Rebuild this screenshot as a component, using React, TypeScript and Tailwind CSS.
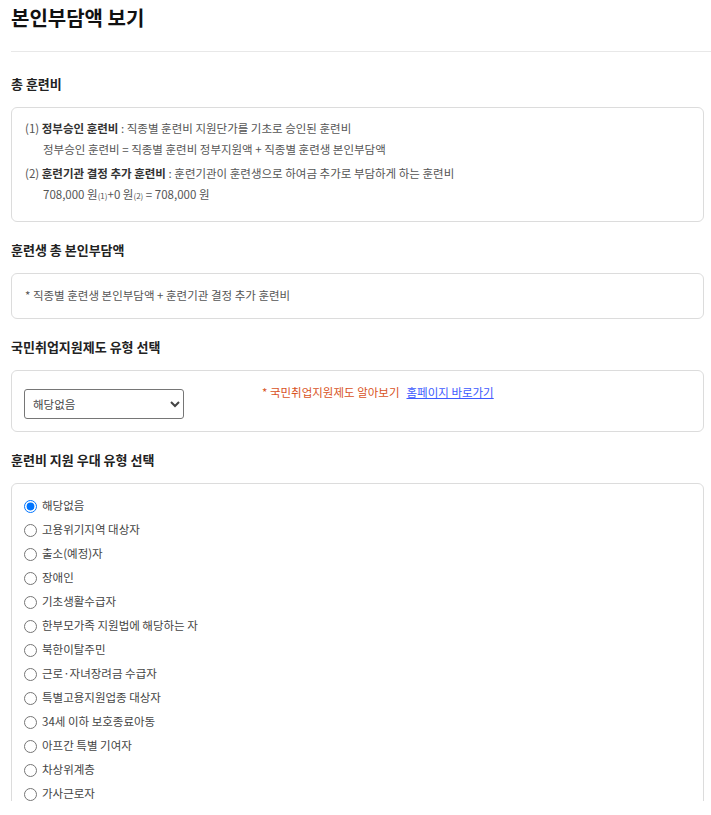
import React from 'react';

const benefitTypes = [
  '해당없음',
  '고용위기지역 대상자',
  '출소(예정)자',
  '장애인',
  '기초생활수급자',
  '한부모가족 지원법에 해당하는 자',
  '북한이탈주민',
  '근로·자녀장려금 수급자',
  '특별고용지원업종 대상자',
  '34세 이하 보호종료아동',
  '아프간 특별 기여자',
  '차상위계층',
  '가사근로자',
];

const SectionTitle: React.FC<{ children: React.ReactNode }> = ({ children }) => (
  <h3 className="mt-[18px] mb-[13px] text-[13px] leading-[20px] font-bold text-[#222]">{children}</h3>
);

export default function App() {
  return (
    <div
      className="h-[801px] overflow-hidden bg-white pl-[11px] pr-[7px] text-[#555]"
      style={{ fontFamily: '"Noto Sans CJK KR", "Noto Sans", sans-serif' }}
    >
      <h2 className="pt-[4px] text-[20px] leading-[28px] font-bold text-[#111]">본인부담액 보기</h2>
      <div className="mt-[19px] -mr-[7px] border-t border-[#e8e8e8]" />

      <h3 className="mt-[22px] mb-[13px] text-[13px] leading-[20px] font-bold text-[#222]">총 훈련비</h3>
      <div className="rounded-[6px] border border-[#dcdcdc] px-[13px] pt-[10px] pb-[15px] text-[11.5px]">
        <div className="leading-[21px]">
          (1) <b className="font-bold text-[#333]">정부승인 훈련비</b> : 직종별 훈련비 지원단가를 기초로 승인된 훈련비
        </div>
        <div className="pl-[18px] leading-[21px]">정부승인 훈련비 = 직종별 훈련비 정부지원액 + 직종별 훈련생 본인부담액</div>
        <div className="mt-[3px] leading-[21px]">
          (2) <b className="font-bold text-[#333]">훈련기관 결정 추가 훈련비</b> : 훈련기관이 훈련생으로 하여금 추가로 부담하게 하는 훈련비
        </div>
        <div className="pl-[18px] leading-[21px]">
          708,000 원<span className="text-[8px]">(1)</span>+0 원<span className="text-[8px]">(2)</span> = 708,000 원
        </div>
      </div>

      <SectionTitle>훈련생 총 본인부담액</SectionTitle>
      <div className="rounded-[6px] border border-[#dcdcdc] px-[13px] pt-[11px] pb-[12px] text-[11.5px] leading-[21px]">
        * 직종별 훈련생 본인부담액 + 훈련기관 결정 추가 훈련비
      </div>

      <SectionTitle>국민취업지원제도 유형 선택</SectionTitle>
      <div className="flex items-start rounded-[6px] border border-[#dcdcdc] px-[12px] pt-[11px] pb-[12px] text-[11.5px]">
        <select
          defaultValue="none"
          className="mt-[7px] h-[30px] w-[160px] rounded-[3px] border border-[#767676] bg-white px-[4px] text-[11.5px] text-[#444]"
        >
          <option value="none">해당없음</option>
          <option value="1">Ⅰ유형</option>
          <option value="2">Ⅱ유형</option>
        </select>
        <div className="ml-[78px] leading-[21px]">
          <span className="text-[#d9531e]">* 국민취업지원제도 알아보기</span>
          <a href="#" className="ml-[7px] text-[#3d5afe] underline">홈페이지 바로가기</a>
        </div>
      </div>

      <SectionTitle>훈련비 지원 우대 유형 선택</SectionTitle>
      <div className="rounded-[6px] border border-[#dcdcdc] px-[12px] pt-[10px] pb-[24px] text-[11.5px] text-[#444]">
        {benefitTypes.map((t, i) => (
          <label key={t} className="flex h-[24px] items-center gap-[5px]">
            <input type="radio" name="benefit" defaultChecked={i === 0} className="h-[13px] w-[13px]" />
            <span>{t}</span>
          </label>
        ))}
      </div>
    </div>
  );
}
